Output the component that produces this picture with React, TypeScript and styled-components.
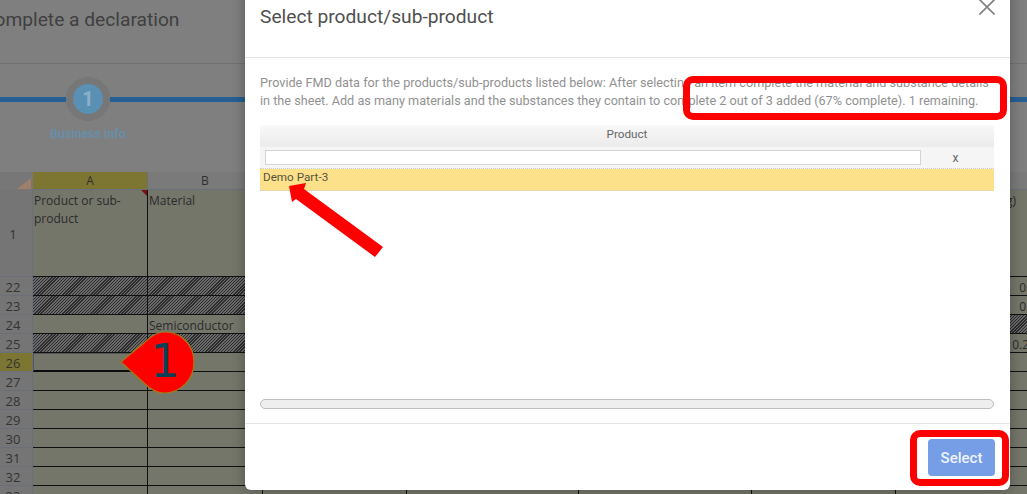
import React from 'react';
import styled, { createGlobalStyle } from 'styled-components';

const GlobalStyle = createGlobalStyle`
  html, body {
    margin: 0;
    padding: 0;
    overflow: hidden;
    background: #7f7f7f;
    font-family: Roboto, "Liberation Sans", sans-serif;
  }
`;

const Page = styled.div`
  position: relative;
  width: 1027px;
  height: 494px;
  overflow: hidden;
  background: #7f7f7f;
`;

const PageHeader = styled.div`
  height: 64px;
  box-sizing: border-box;
  border-bottom: 1px solid #717171;
  padding-top: 8px;
  overflow: hidden;
`;

const PageTitle = styled.h1`
  margin: 0 0 0 -18px;
  font-size: 19.2px;
  line-height: 24px;
  font-weight: 400;
  color: #404040;
  white-space: nowrap;
`;

const Stepper = styled.div`
  height: 108px;
  padding-top: 13px;
  box-sizing: border-box;
  display: flex;
  flex-direction: column;
  align-items: flex-start;
`;

const StepTrack = styled.div`
  display: flex;
  align-items: center;
  width: 100%;
  height: 44px;
`;

const TrackLine = styled.div<{ $width?: number }>`
  height: 5px;
  background: #265f94;
  ${p => (p.$width ? `width: ${p.$width}px;` : 'flex: 1;')}
`;

const StepRing = styled.div`
  width: 44px;
  height: 44px;
  box-sizing: border-box;
  border-radius: 50%;
  background: #777;
  display: flex;
  align-items: center;
  justify-content: center;
`;

const StepDot = styled.div`
  width: 30px;
  height: 30px;
  border-radius: 50%;
  background: #5b90b5;
  color: #8db0c8;
  font-size: 20px;
  font-weight: 700;
  display: flex;
  align-items: center;
  justify-content: center;
`;

const StepLabel = styled.div`
  margin-left: 50px;
  margin-top: 5px;
  font-size: 12.5px;
  font-weight: 500;
  color: #6590ad;
`;

const Sheet = styled.div`
  display: grid;
  grid-template-columns: 33px 115px 115px 144px 172px 173px 144px 143px;
  grid-template-rows: 18px 87px repeat(12, 19px);
  width: 1039px;
  font-family: "Open Sans", "Liberation Sans", sans-serif;
  font-size: 12px;
  color: #2b2b2b;
`;

const Corner = styled.div`
  background: #777;
  position: relative;
  &::after {
    content: '';
    position: absolute;
    right: 2px;
    bottom: 1px;
    border-style: solid;
    border-width: 0 0 11px 14px;
    border-color: transparent transparent #a07f68 transparent;
  }
`;

const ColHead = styled.div<{ $active?: boolean }>`
  box-sizing: border-box;
  border-right: 1px solid #6e6e6e;
  border-bottom: 1px solid #67707c;
  background: ${p => (p.$active ? '#7c7632' : '#7a7a7a')};
  color: #303030;
  text-align: center;
  line-height: 18px;
`;

const RowHead = styled.div<{ $tall?: boolean; $active?: boolean }>`
  box-sizing: border-box;
  border-right: 1px solid #66707f;
  border-bottom: 1px solid #6a6f78;
  background: ${p => (p.$active ? '#7c7632' : '#757575')};
  color: #333;
  text-align: center;
  font-size: 13px;
  padding-right: 6px;
  line-height: ${p => (p.$tall ? '88px' : '20px')};
`;

const Cell = styled.div<{ $hatch?: boolean; $selected?: boolean; $marked?: boolean; $wrap?: boolean }>`
  position: relative;
  box-sizing: border-box;
  background: ${p =>
    p.$hatch
      ? 'repeating-linear-gradient(135deg, #2c2c2c 0 1px, #6a6a6a 1px 2.2px)'
      : '#75766a'};
  border-right: 1px solid #101010;
  border-bottom: 1px solid #101010;
  padding: 2px 2px 0 1px;
  line-height: 18px;
  white-space: ${p => (p.$wrap ? 'normal' : 'nowrap')};
  overflow: hidden;
  ${p => p.$selected && 'border: 1px solid #555; border-bottom: 2px solid #0c0c0c;'}
  ${p =>
    p.$marked &&
    `&::after {
      content: '';
      position: absolute;
      top: 0;
      right: 0;
      border-style: solid;
      border-width: 0 6px 6px 0;
      border-color: transparent #7c1010 transparent transparent;
    }`}
`;

const ValueCell = styled(Cell)`
  text-align: right;
`;

const Modal = styled.div`
  position: absolute;
  left: 245px;
  top: -16px;
  width: 765px;
  height: 506px;
  background: #fff;
  border-radius: 0 0 6px 6px;
  box-shadow: 0 0 14px rgba(0, 0, 0, 0.3);
  display: flex;
  flex-direction: column;
  box-sizing: border-box;
`;

const ModalHeader = styled.div`
  height: 74px;
  flex: none;
  box-sizing: border-box;
  border-bottom: 1px solid #e5e5e5;
  padding: 21px 15px 0;
  display: flex;
  justify-content: space-between;
  align-items: flex-start;
`;

const ModalTitle = styled.h2`
  margin: 0;
  font-size: 19.2px;
  font-weight: 400;
  line-height: 24px;
  color: #4f4f4f;
`;

const CloseIcon = styled.svg`
  width: 16px;
  height: 16px;
  margin: -6px 0 0 0;
`;

const ModalBody = styled.div`
  flex: 1;
  padding: 16px 15px 0;
  display: flex;
  flex-direction: column;
`;

const Intro = styled.p`
  margin: 0;
  font-size: 12.66px;
  line-height: 17.5px;
  color: #919191;
  white-space: nowrap;
`;

const Grid = styled.div`
  margin-top: 16px;
  width: 734px;
  flex: 1;
  display: flex;
  flex-direction: column;
  padding-bottom: 14px;
`;

const GridHead = styled.div`
  height: 22px;
  background: linear-gradient(#f8f8f8, #ebebeb);
  text-align: center;
  font-size: 11.7px;
  line-height: 19px;
  color: #666;
  border-radius: 3px 3px 0 0;
`;

const FilterRow = styled.div`
  height: 22px;
  display: flex;
  align-items: center;
  background: #f5f5f5;
  border-bottom: 1px dotted #ccc;
  padding-left: 5px;
  box-sizing: border-box;
`;

const FilterInput = styled.div`
  width: 656px;
  height: 15px;
  box-sizing: border-box;
  background: #fff;
  border: 1px solid #d4d4d4;
`;

const FilterClear = styled.div`
  flex: 1;
  text-align: center;
  font-size: 12px;
  color: #666;
  padding-right: 4px;
`;

const SelectedRow = styled.div`
  height: 22px;
  background: #fde08a;
  border-bottom: 1px dotted #ccc;
  padding-left: 3px;
  font-size: 11.7px;
  line-height: 17px;
  color: #55533f;
  box-sizing: border-box;
`;

const Spacer = styled.div`
  flex: 1;
`;

const ScrollBar = styled.div`
  height: 10px;
  box-sizing: border-box;
  border: 1px solid #bdbdbd;
  border-radius: 5px;
  background: #eee;
`;

const ModalFooter = styled.div`
  height: 67px;
  flex: none;
  box-sizing: border-box;
  border-top: 1px solid #e5e5e5;
  display: flex;
  justify-content: flex-end;
  align-items: flex-start;
  padding: 15px 15px 0 0;
`;

const SelectButton = styled.button`
  width: 67px;
  height: 37px;
  border: none;
  border-radius: 4px;
  background: #759ee6;
  color: #eef3fc;
  font-family: inherit;
  font-size: 15px;
  font-weight: 500;
  padding: 0;
`;

const Highlight = styled.div<{ $left: number; $top: number; $width: number; $height: number }>`
  position: absolute;
  left: ${p => p.$left}px;
  top: ${p => p.$top}px;
  width: ${p => p.$width}px;
  height: ${p => p.$height}px;
  box-sizing: border-box;
  border: 7px solid #ff0000;
  border-radius: 10px;
`;

const Annotation = styled.svg`
  position: absolute;
  left: 0;
  top: 0;
  width: 1027px;
  height: 494px;
  pointer-events: none;
`;

const MarkerNumber = styled.div`
  position: absolute;
  left: 147px;
  top: 332px;
  width: 36px;
  text-align: center;
  font-family: "DejaVu Sans", sans-serif;
  font-size: 46px;
  line-height: 58px;
  color: #0d4055;
`;

const columns = ['A', 'B', 'C', 'D', 'E', 'F', 'G'];

type RowData = {
  n: number;
  hatch?: boolean;
  hatchLast?: boolean;
  b?: string;
  last?: string;
  selected?: boolean;
};

const rows: RowData[] = [
  { n: 22, hatch: true, last: '0.5' },
  { n: 23, hatch: true, last: '0.5' },
  { n: 24, b: 'Semiconductor', hatchLast: true },
  { n: 25, hatch: true, last: '0.25' },
  { n: 26, selected: true },
  { n: 27 },
  { n: 28 },
  { n: 29 },
  { n: 30 },
  { n: 31 },
  { n: 32 },
  { n: 33 },
];

const App: React.FC = () => {
  return (
    <Page>
      <GlobalStyle />
      <PageHeader>
        <PageTitle>Complete a declaration</PageTitle>
      </PageHeader>
      <Stepper>
        <StepTrack>
          <TrackLine $width={66} />
          <StepRing>
            <StepDot>1</StepDot>
          </StepRing>
          <TrackLine />
        </StepTrack>
        <StepLabel>Business info</StepLabel>
      </Stepper>
      <Sheet>
        <Corner />
        {columns.map((c, i) => (
          <ColHead key={c} $active={i === 0}>{c}</ColHead>
        ))}
        <RowHead $tall>1</RowHead>
        <Cell $wrap $marked>Product or sub-product</Cell>
        <Cell $wrap>Material</Cell>
        <Cell />
        <Cell />
        <Cell />
        <Cell />
        <Cell>Weights of parts (mg)</Cell>
        {rows.map(r => (
          <React.Fragment key={r.n}>
            <RowHead $active={r.selected}>{r.n}</RowHead>
            <Cell $hatch={r.hatch} $selected={r.selected} />
            <Cell $hatch={r.hatch}>{r.b}</Cell>
            <Cell $hatch={r.hatch} />
            <Cell $hatch={r.hatch} />
            <Cell $hatch={r.hatch} />
            <Cell $hatch={r.hatch} />
            <ValueCell $hatch={r.hatchLast}>{r.last}</ValueCell>
          </React.Fragment>
        ))}
      </Sheet>
      <Modal>
        <ModalHeader>
          <ModalTitle>Select product/sub-product</ModalTitle>
          <CloseIcon viewBox="0 0 16 16">
            <path d="M0.5 0.5 L15.5 15.5 M15.5 0.5 L0.5 15.5" stroke="#808080" strokeWidth="1.6" fill="none" />
          </CloseIcon>
        </ModalHeader>
        <ModalBody>
          <Intro>
            Provide FMD data for the products/sub-products listed below: After selecting an item complete the material and substance details
            <br />
            in the sheet. Add as many materials and the substances they contain to complete 2 out of 3 added (67% complete). 1 remaining.
          </Intro>
          <Grid>
            <GridHead>Product</GridHead>
            <FilterRow>
              <FilterInput />
              <FilterClear>x</FilterClear>
            </FilterRow>
            <SelectedRow>Demo Part-3</SelectedRow>
            <Spacer />
            <ScrollBar />
          </Grid>
        </ModalBody>
        <ModalFooter>
          <SelectButton>Select</SelectButton>
        </ModalFooter>
      </Modal>
      <Highlight $left={683} $top={76} $width={324} $height={44} />
      <Highlight $left={910} $top={430} $width={99} $height={56} />
      <Annotation viewBox="0 0 1027 494">
        <path d="M289 186 L306 183 L304 189 L383 247 L375 257 L296 199 L292 202 Z" fill="#ff0000" />
        <path
          d="M121 362 L145 342 C152 335 160 332 165 332 C182 332 194 346 194 362 C194 379 181 393 164 393 C156 393 150 389 144 383 Z"
          fill="#ff0000"
          stroke="#a87a10"
          strokeWidth="1.2"
        />
      </Annotation>
      <MarkerNumber>1</MarkerNumber>
    </Page>
  );
};

export default App;
